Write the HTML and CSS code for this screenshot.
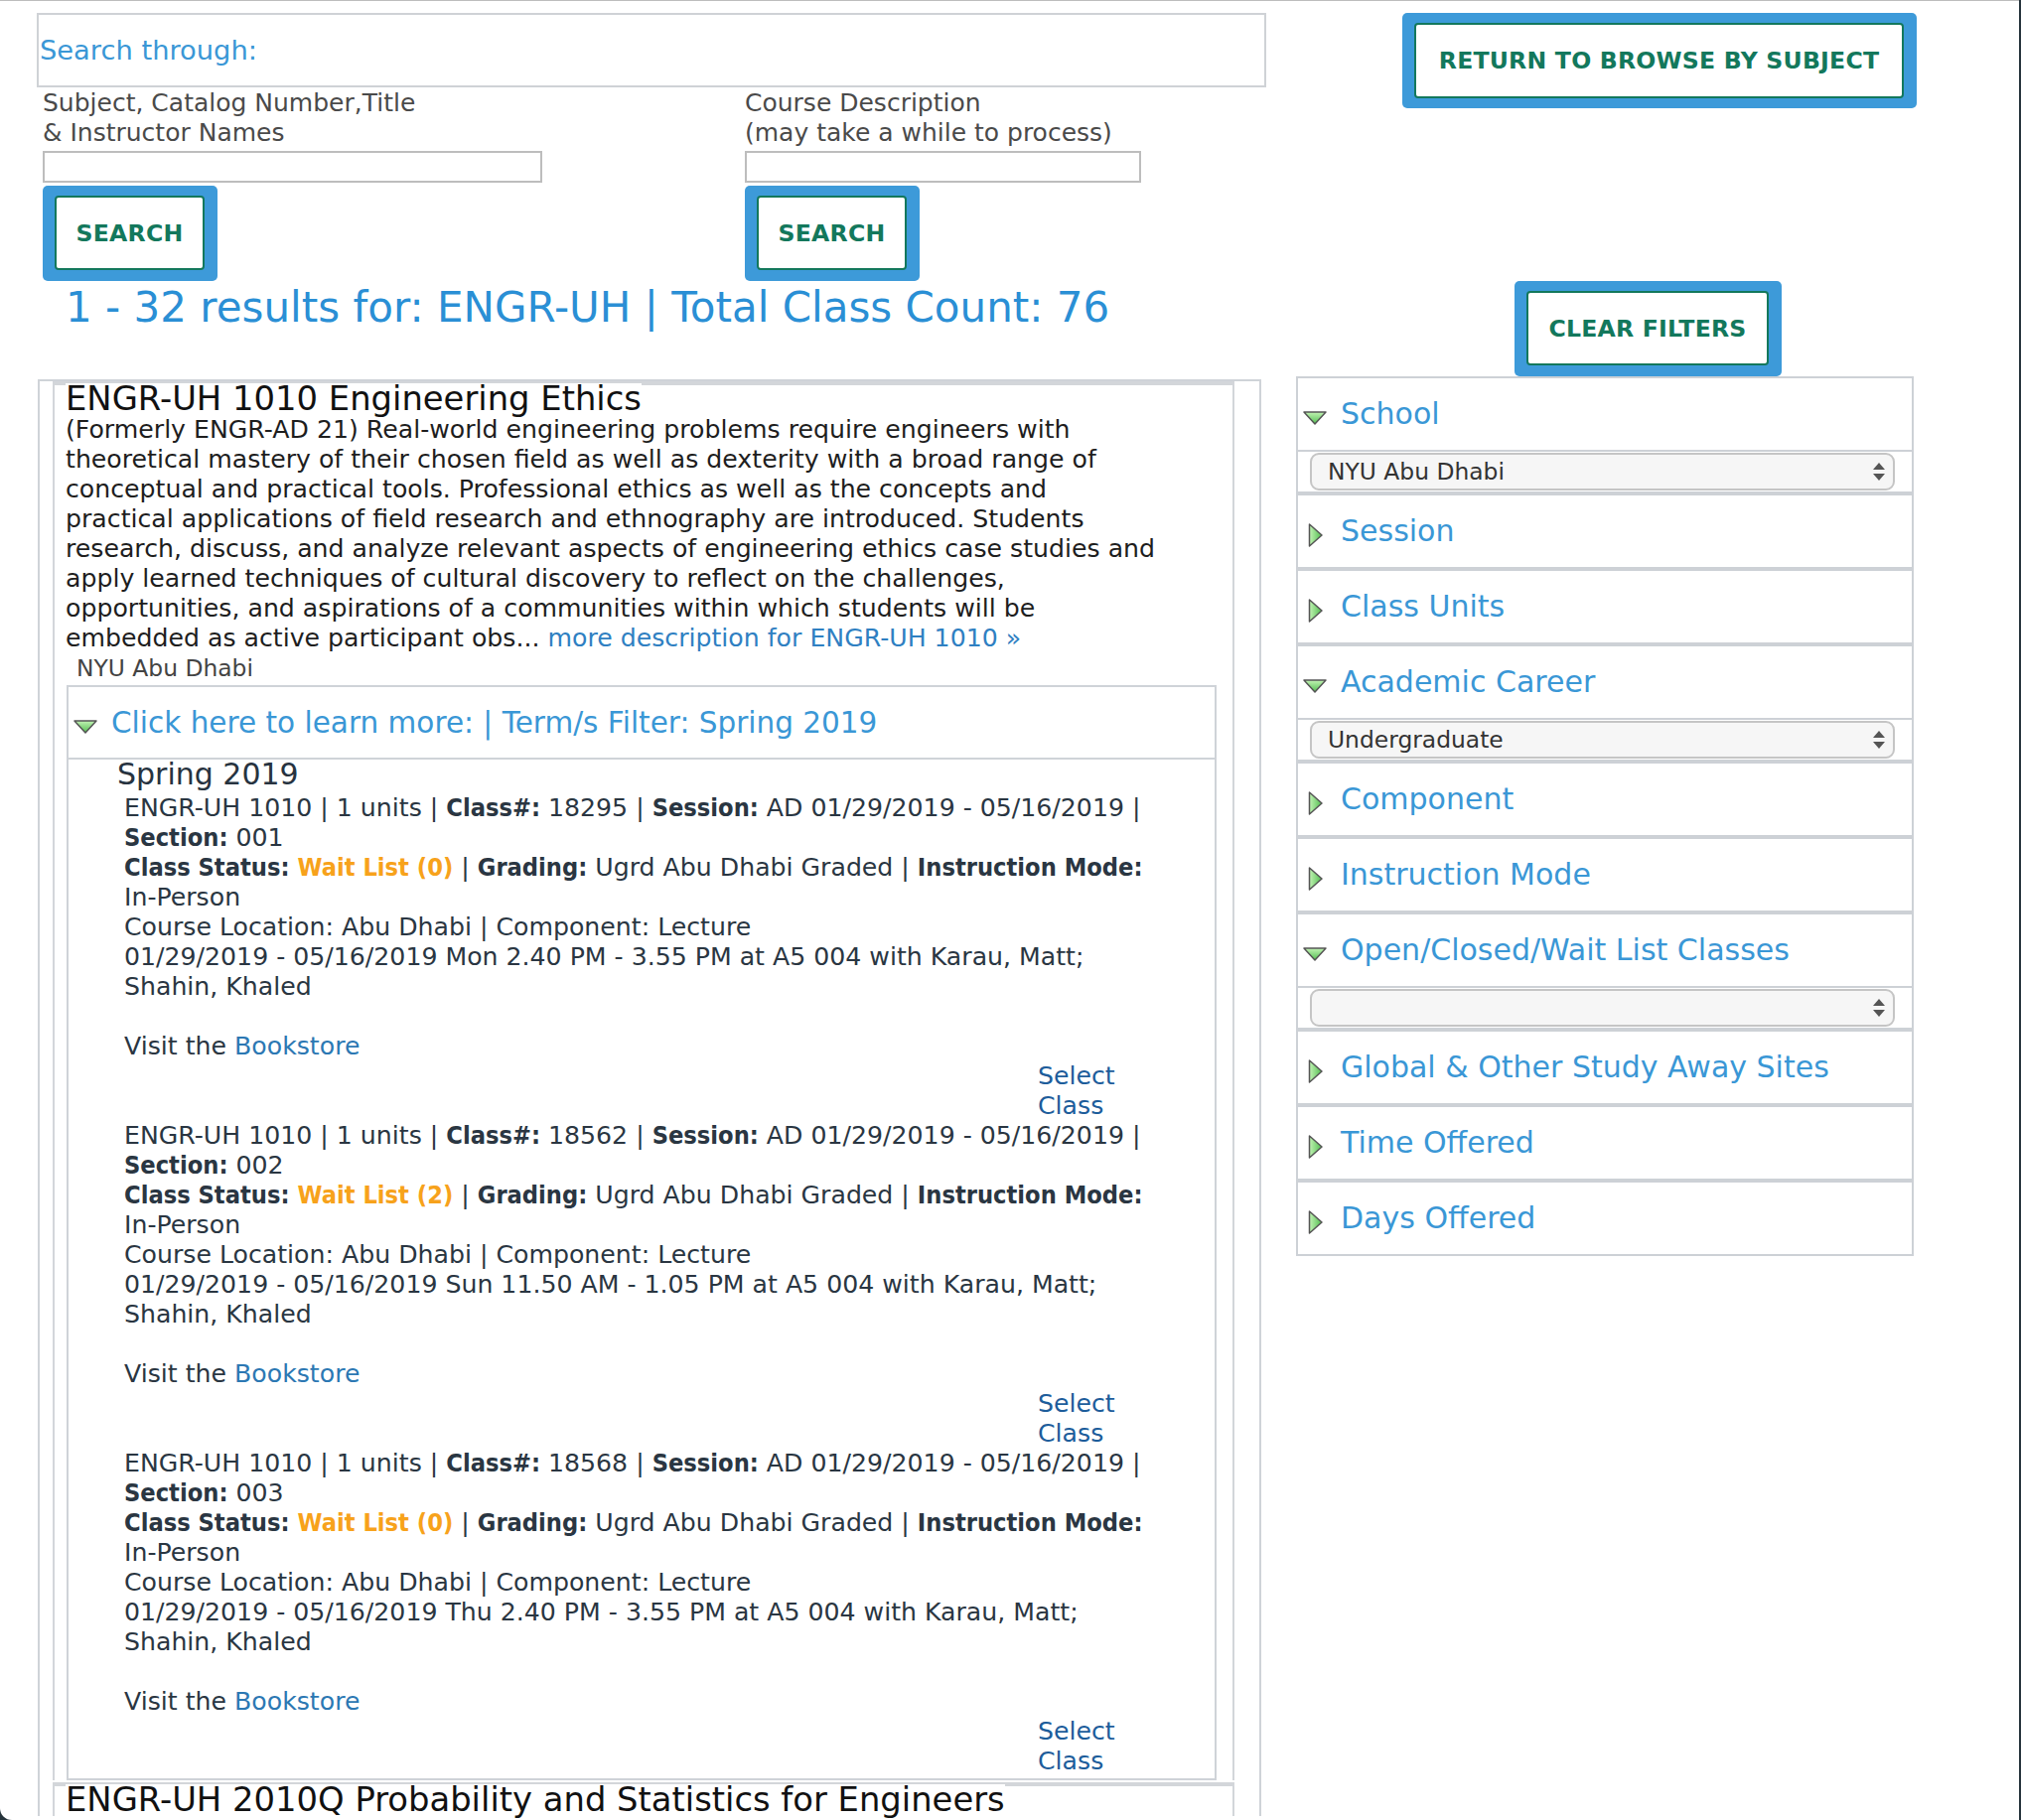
FILE: index.html
```html
<!DOCTYPE html>
<html lang="en">
<head>
<meta charset="utf-8">
<title>Class Search Results</title>
<link rel="stylesheet" href="styles.css">
</head>
<body>
<svg class="defs" width="0" height="0" aria-hidden="true">
  <defs>
    <linearGradient id="gDown" x1="0" y1="0" x2="0" y2="1">
      <stop offset="0" stop-color="#c2f3b4"/>
      <stop offset="1" stop-color="#52bd50"/>
    </linearGradient>
    <linearGradient id="gRight" x1="0" y1="0" x2="1" y2="0">
      <stop offset="0" stop-color="#c2f3b4"/>
      <stop offset="1" stop-color="#52bd50"/>
    </linearGradient>
  </defs>
</svg>
<div class="window">
  <div class="main">
    <div class="search-through">Search through:</div>
    <div class="search-cols">
      <div class="search-col col-a">
        <label class="search-label">Subject, Catalog Number,Title<br>&amp; Instructor Names</label>
        <input class="search-input input-a" type="text">
        <button class="btn btn-search"><span class="btn-inner">SEARCH</span></button>
      </div>
      <div class="search-col col-b">
        <label class="search-label">Course Description<br>(may take a while to process)</label>
        <input class="search-input input-b" type="text">
        <button class="btn btn-search"><span class="btn-inner">SEARCH</span></button>
      </div>
    </div>
    <h1 class="results-title">1 - 32 results for: ENGR-UH | Total Class Count: 76</h1>
    <div class="results">
      <div class="course">
        <h2 class="course-title">ENGR-UH 1010 Engineering Ethics</h2>
        <p class="course-desc">(Formerly ENGR-AD 21) Real-world engineering problems require engineers with theoretical mastery of their chosen field as well as dexterity with a broad range of conceptual and practical tools. Professional ethics as well as the concepts and practical applications of field research and ethnography are introduced. Students research, discuss, and analyze relevant aspects of engineering ethics case studies and apply learned techniques of cultural discovery to reflect on the challenges, opportunities, and aspirations of a communities within which students will be embedded as active participant obs... <a class="link-desc" href="#">more description for ENGR-UH 1010 &raquo;</a></p>
        <div class="course-school">NYU Abu Dhabi</div>
        <div class="sections">
          <div class="sections-head">
            <svg class="tri-down" width="24" height="14" viewBox="0 0 24 14"><polygon points="1,1 23,1 12,13" fill="url(#gDown)" stroke="#555" stroke-width="1.5" stroke-linejoin="round"/></svg>
            <span class="sections-label">Click here to learn more: | Term/s Filter: Spring 2019</span>
          </div>
          <div class="sections-body">
            <div class="term">Spring 2019</div>
            <div class="class-block">
              <div class="class-info">ENGR-UH 1010 | 1 units | <b>Class#:</b> 18295 | <b>Session:</b> AD 01/29/2019 - 05/16/2019 | <b>Section:</b> 001<br><b>Class Status:</b> <b class="wait">Wait List (0)</b> | <b>Grading:</b> Ugrd Abu Dhabi Graded | <b>Instruction Mode:</b> <span class="nowrap">In-Person</span><br>Course Location: Abu Dhabi | Component: Lecture<br>01/29/2019 - 05/16/2019 Mon 2.40 PM - 3.55 PM at A5 004 with Karau, Matt; Shahin, Khaled<br><br>Visit the <a class="bookstore" href="#">Bookstore</a></div>
              <div class="select-class"><a href="#">Select Class</a></div>
            </div>
            <div class="class-block">
              <div class="class-info">ENGR-UH 1010 | 1 units | <b>Class#:</b> 18562 | <b>Session:</b> AD 01/29/2019 - 05/16/2019 | <b>Section:</b> 002<br><b>Class Status:</b> <b class="wait">Wait List (2)</b> | <b>Grading:</b> Ugrd Abu Dhabi Graded | <b>Instruction Mode:</b> <span class="nowrap">In-Person</span><br>Course Location: Abu Dhabi | Component: Lecture<br>01/29/2019 - 05/16/2019 Sun 11.50 AM - 1.05 PM at A5 004 with Karau, Matt; Shahin, Khaled<br><br>Visit the <a class="bookstore" href="#">Bookstore</a></div>
              <div class="select-class"><a href="#">Select Class</a></div>
            </div>
            <div class="class-block">
              <div class="class-info">ENGR-UH 1010 | 1 units | <b>Class#:</b> 18568 | <b>Session:</b> AD 01/29/2019 - 05/16/2019 | <b>Section:</b> 003<br><b>Class Status:</b> <b class="wait">Wait List (0)</b> | <b>Grading:</b> Ugrd Abu Dhabi Graded | <b>Instruction Mode:</b> <span class="nowrap">In-Person</span><br>Course Location: Abu Dhabi | Component: Lecture<br>01/29/2019 - 05/16/2019 Thu 2.40 PM - 3.55 PM at A5 004 with Karau, Matt; Shahin, Khaled<br><br>Visit the <a class="bookstore" href="#">Bookstore</a></div>
              <div class="select-class"><a href="#">Select Class</a></div>
            </div>
          </div>
        </div>
      </div>
      <div class="course">
        <h2 class="course-title">ENGR-UH 2010Q Probability and Statistics for Engineers</h2>
      </div>
    </div>
  </div>

  <div class="sidebar">
    <button class="btn btn-return"><span class="btn-inner">RETURN TO BROWSE BY SUBJECT</span></button>
    <button class="btn btn-clear"><span class="btn-inner">CLEAR FILTERS</span></button>
    <div class="facets">
      <div class="facet">
        <div class="facet-head open"><span class="facet-icon"><svg width="24" height="14" viewBox="0 0 24 14"><polygon points="1,1 23,1 12,13" fill="url(#gDown)" stroke="#555" stroke-width="1.5" stroke-linejoin="round"/></svg></span><span class="facet-name">School</span></div>
        <div class="facet-body"><div class="select"><span>NYU Abu Dhabi</span><svg width="12" height="18" viewBox="0 0 12 18"><polygon points="0,7 6,0 12,7" fill="#555"/><polygon points="0,11 12,11 6,18" fill="#555"/></svg></div></div>
      </div>
      <div class="facet">
        <div class="facet-head"><span class="facet-icon"><svg width="15" height="24" viewBox="0 0 15 24"><polygon points="1.5,1 14,12 1.5,23" fill="url(#gRight)" stroke="#555" stroke-width="1.5" stroke-linejoin="round"/></svg></span><span class="facet-name">Session</span></div>
      </div>
      <div class="facet">
        <div class="facet-head"><span class="facet-icon"><svg width="15" height="24" viewBox="0 0 15 24"><polygon points="1.5,1 14,12 1.5,23" fill="url(#gRight)" stroke="#555" stroke-width="1.5" stroke-linejoin="round"/></svg></span><span class="facet-name">Class Units</span></div>
      </div>
      <div class="facet">
        <div class="facet-head open"><span class="facet-icon"><svg width="24" height="14" viewBox="0 0 24 14"><polygon points="1,1 23,1 12,13" fill="url(#gDown)" stroke="#555" stroke-width="1.5" stroke-linejoin="round"/></svg></span><span class="facet-name">Academic Career</span></div>
        <div class="facet-body"><div class="select"><span>Undergraduate</span><svg width="12" height="18" viewBox="0 0 12 18"><polygon points="0,7 6,0 12,7" fill="#555"/><polygon points="0,11 12,11 6,18" fill="#555"/></svg></div></div>
      </div>
      <div class="facet">
        <div class="facet-head"><span class="facet-icon"><svg width="15" height="24" viewBox="0 0 15 24"><polygon points="1.5,1 14,12 1.5,23" fill="url(#gRight)" stroke="#555" stroke-width="1.5" stroke-linejoin="round"/></svg></span><span class="facet-name">Component</span></div>
      </div>
      <div class="facet">
        <div class="facet-head"><span class="facet-icon"><svg width="15" height="24" viewBox="0 0 15 24"><polygon points="1.5,1 14,12 1.5,23" fill="url(#gRight)" stroke="#555" stroke-width="1.5" stroke-linejoin="round"/></svg></span><span class="facet-name">Instruction Mode</span></div>
      </div>
      <div class="facet">
        <div class="facet-head open"><span class="facet-icon"><svg width="24" height="14" viewBox="0 0 24 14"><polygon points="1,1 23,1 12,13" fill="url(#gDown)" stroke="#555" stroke-width="1.5" stroke-linejoin="round"/></svg></span><span class="facet-name">Open/Closed/Wait List Classes</span></div>
        <div class="facet-body"><div class="select"><span></span><svg width="12" height="18" viewBox="0 0 12 18"><polygon points="0,7 6,0 12,7" fill="#555"/><polygon points="0,11 12,11 6,18" fill="#555"/></svg></div></div>
      </div>
      <div class="facet">
        <div class="facet-head"><span class="facet-icon"><svg width="15" height="24" viewBox="0 0 15 24"><polygon points="1.5,1 14,12 1.5,23" fill="url(#gRight)" stroke="#555" stroke-width="1.5" stroke-linejoin="round"/></svg></span><span class="facet-name">Global &amp; Other Study Away Sites</span></div>
      </div>
      <div class="facet">
        <div class="facet-head"><span class="facet-icon"><svg width="15" height="24" viewBox="0 0 15 24"><polygon points="1.5,1 14,12 1.5,23" fill="url(#gRight)" stroke="#555" stroke-width="1.5" stroke-linejoin="round"/></svg></span><span class="facet-name">Time Offered</span></div>
      </div>
      <div class="facet">
        <div class="facet-head"><span class="facet-icon"><svg width="15" height="24" viewBox="0 0 15 24"><polygon points="1.5,1 14,12 1.5,23" fill="url(#gRight)" stroke="#555" stroke-width="1.5" stroke-linejoin="round"/></svg></span><span class="facet-name">Days Offered</span></div>
      </div>
    </div>
  </div>
</div>
</body>
</html>
```

FILE: styles.css
```css
html {
  background: #26343c;
}

body {
  margin: 0;
  font-family: "DejaVu Sans", Verdana, sans-serif;
  font-size: 23.4px;
  line-height: 30px;
  color: #222;
}

.defs {
  position: absolute;
  width: 0;
  height: 0;
}

.window {
  display: flex;
  align-items: flex-start;
  box-sizing: border-box;
  height: 1833px;
  margin-right: 2px;
  padding: 12px 0 0 37px;
  background: #fff;
  border-top: 1px solid #bdbdbd;
  border-bottom-left-radius: 12px;
  overflow: hidden;
}

.main {
  flex: none;
  width: 1238px;
}

.sidebar {
  flex: none;
  width: 622px;
  margin-left: 30px;
}

/* search */
.search-through {
  display: flex;
  align-items: center;
  box-sizing: border-box;
  height: 75px;
  padding-left: 1px;
  border: 2px solid #cfd2d6;
  color: #3a97d6;
  font-size: 27.3px;
}

.search-cols {
  display: flex;
  padding-left: 6px;
  margin-top: 1px;
}

.col-a {
  width: 707px;
}

.search-label {
  display: block;
  font-size: 25px;
  line-height: 30px;
  color: #4a4a4a;
}

.search-input {
  display: block;
  box-sizing: border-box;
  height: 32px;
  margin: 3px 0 0;
  padding: 0 6px;
  border: 2px solid #bdbdbd;
  background: #fff;
}

.input-a {
  width: 503px;
}

.input-b {
  width: 399px;
}

/* buttons */
.btn {
  display: flex;
  box-sizing: border-box;
  height: 96px;
  padding: 10px 13px 11px 12px;
  border: none;
  border-radius: 5px;
  background: #3d9ad9;
  font-family: inherit;
  cursor: pointer;
}

.btn-inner {
  flex: 1;
  display: flex;
  align-items: center;
  justify-content: center;
  background: #fff;
  border: 2px solid #13785c;
  border-radius: 4px;
  color: #13785c;
  font-size: 23.6px;
  font-weight: bold;
  letter-spacing: 0.2px;
}

.btn-search {
  width: 176px;
  margin-top: 3px;
}

.btn-return {
  width: 518px;
  margin-left: 107px;
  padding-bottom: 10px;
}

.btn-clear {
  width: 269px;
  margin: 174px 0 0 220px;
}

/* results */
.results-title {
  margin: 0 0 45px;
  padding-left: 29px;
  font-size: 42px;
  line-height: 54px;
  font-weight: normal;
  color: #2a8fd5;
}

.results {
  box-sizing: border-box;
  width: 1232px;
  margin-left: 1px;
  padding-left: 13px;
  border: 2px solid #cfd3d8;
  border-bottom: none;
}

.course {
  box-sizing: border-box;
  width: 1190px;
  padding-left: 11px;
  border: 2px solid #d3d6da;
  border-top-width: 4px;
  border-bottom: none;
}

.course-title {
  width: fit-content;
  margin: -2px 0 0;
  background: #fff;
  font-size: 33.8px;
  line-height: 32px;
  font-weight: normal;
  color: #111;
}

.course-desc {
  max-width: 1099px;
  margin: 0;
  font-size: 25.2px;
  color: #1e1e1e;
}

.link-desc {
  color: #2f80c2;
  text-decoration: none;
}

.course-school {
  padding-left: 11px;
  color: #444;
}

.sections {
  box-sizing: border-box;
  width: 1158px;
  margin: 2px 0 2px 1px;
  border: 2px solid #cfd3d8;
}

.sections-head {
  display: flex;
  align-items: center;
  height: 71px;
  padding-left: 5px;
  border-bottom: 2px solid #cfd3d8;
  color: #3a97d6;
  font-size: 29.5px;
}

.tri-down {
  flex: none;
  margin: 9px 14px 0 0;
}

.sections-body {
  padding: 0 0 2px 49px;
  color: #2a3642;
}

.term {
  margin-bottom: 4px;
  font-size: 30px;
  line-height: 30px;
  color: #273340;
}

.class-block {
  padding-left: 7px;
  font-size: 25.2px;
}

.class-info {
  width: 1060px;
}

.class-info b {
  font-weight: bold;
  font-stretch: condensed;
}

.nowrap {
  white-space: nowrap;
}

.wait {
  color: #f7a21b;
}

.bookstore {
  color: #2c78b3;
  text-decoration: none;
}

.select-class {
  width: 100px;
  margin-left: 920px;
}

.select-class a {
  color: #1d5d9b;
  text-decoration: none;
}

/* facets */
.facet {
  border: 2px solid #cdd1d6;
}

.facet-head {
  display: flex;
  align-items: center;
  height: 72px;
  color: #3a97d6;
  font-size: 30px;
}

.facet-head.open {
  border-bottom: 2px solid #cdd1d6;
}

.facet-icon {
  flex: none;
  display: flex;
  justify-content: center;
  width: 34px;
  margin: 8px 9px 0 0;
}

.facet-body {
  padding: 1px 17px 1px 12px;
}

.select {
  display: flex;
  align-items: center;
  justify-content: space-between;
  box-sizing: border-box;
  height: 38px;
  padding: 0 8px 0 16px;
  border: 2px solid #c5c5c5;
  border-radius: 9px;
  background: #f6f6f6;
  color: #333;
}
```
